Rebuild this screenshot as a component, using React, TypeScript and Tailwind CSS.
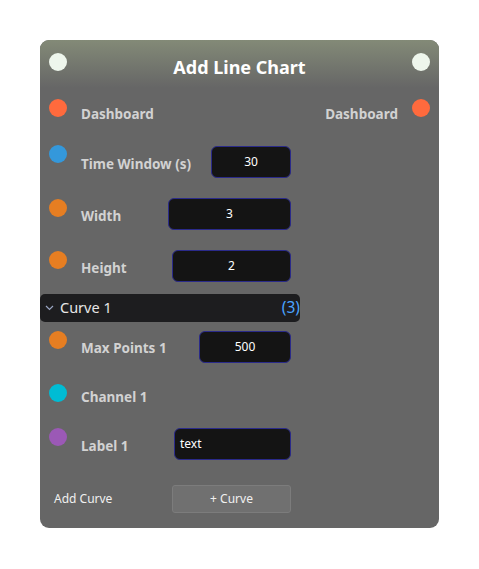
const Dot = ({ color, className = '' }: { color: string; className?: string }) => (
  <div className={`w-[18px] h-[18px] rounded-full shrink-0 ${color} ${className}`} />
);

const Field = ({ value, width, left = false }: { value: string; width: string; left?: boolean }) => (
  <div
    className={`ml-auto h-[32px] ${width} rounded-[6px] border border-[#2a2a8a] bg-[#141414] flex items-center font-normal text-[12px] text-white ${left ? 'justify-start pl-[5px]' : 'justify-center'}`}
  >
    {value}
  </div>
);

const Label = ({ children }: { children: React.ReactNode }) => (
  <span className="ml-[14px] pt-[4px]">{children}</span>
);

const App = () => {
  return (
    <div className="w-[479px] h-[569px] bg-white pt-[40px] pl-[40px]" style={{ fontFamily: '"Noto Sans", sans-serif' }}>
      <div className="w-[399px] h-[488px] rounded-[9px] bg-[#666666] overflow-hidden flex flex-col">
        {/* header */}
        <div className="h-[48px] bg-gradient-to-b from-[#838a77] to-[#666666] flex items-start px-[9px] pt-[13px]">
          <Dot color="bg-[#eef6ec]" />
          <div className="flex-1 text-center text-white font-bold text-[18px] leading-[22px] pt-[3px]">Add Line Chart</div>
          <Dot color="bg-[#eef6ec]" />
        </div>

        {/* dashboard row */}
        <div className="h-[48px] flex items-center px-[9px] text-[13.5px] font-bold text-[#d2d2d2]">
          <Dot color="bg-[#ff6a3d]" className="mb-[8px]" />
          <Label>Dashboard</Label>
          <span className="ml-auto mr-[14px] pt-[4px]">Dashboard</span>
          <Dot color="bg-[#ff6a3d]" className="mb-[8px]" />
        </div>

        <div className="w-[251px] pl-[9px] text-[13.5px] font-bold text-[#d2d2d2]">
          <div className="h-[52px] flex items-center">
            <Dot color="bg-[#3498db]" className="mb-[16px]" />
            <Label>Time Window (s)</Label>
            <Field value="30" width="w-[80px]" />
          </div>
          <div className="h-[52px] flex items-center">
            <Dot color="bg-[#e67e22]" className="mb-[13px]" />
            <Label>Width</Label>
            <Field value="3" width="w-[123px]" />
          </div>
          <div className="h-[52px] flex items-center">
            <Dot color="bg-[#e67e22]" className="mb-[13px]" />
            <Label>Height</Label>
            <Field value="2" width="w-[119px]" />
          </div>
        </div>

        {/* curve group header */}
        <div className="mt-[2px] w-[260px] h-[28px] rounded-[5px] bg-[#1d1d1f] flex items-center pl-[5px] text-[14.5px] font-normal">
          <svg width="9" height="6" viewBox="0 0 9 6" className="mr-[6px]">
            <path d="M1 1 L4.5 4.5 L8 1" fill="none" stroke="#9aa6c4" strokeWidth="1.2" />
          </svg>
          <span className="text-[#e6e6e6]">Curve 1</span>
          <span className="ml-auto text-[#4aa3ff] text-[15.5px]">(3)</span>
        </div>

        <div className="w-[251px] pl-[9px] text-[13.5px] font-bold text-[#d2d2d2]">
          <div className="h-[49px] flex items-center">
            <Dot color="bg-[#e67e22]" className="mb-[13px]" />
            <Label>Max Points 1</Label>
            <Field value="500" width="w-[92px]" />
          </div>
          <div className="h-[49px] flex items-center">
            <Dot color="bg-[#00bcd4]" className="mb-[6px]" />
            <Label>Channel 1</Label>
          </div>
          <div className="h-[48px] flex items-center">
            <Dot color="bg-[#9b59b6]" className="mb-[15px]" />
            <Label>Label 1</Label>
            <Field value="text" width="w-[117px]" left />
          </div>
        </div>

        <div className="mt-[17px] w-[251px] h-[28px] flex items-center pl-[14px] text-[12px] text-[#f0f0f0]">
          <span>Add Curve</span>
          <div className="ml-auto w-[119px] h-[28px] rounded-[3px] bg-[#707070] border border-[#7c7c7c] flex items-center justify-center">
            + Curve
          </div>
        </div>
      </div>
    </div>
  );
};

export default App;
